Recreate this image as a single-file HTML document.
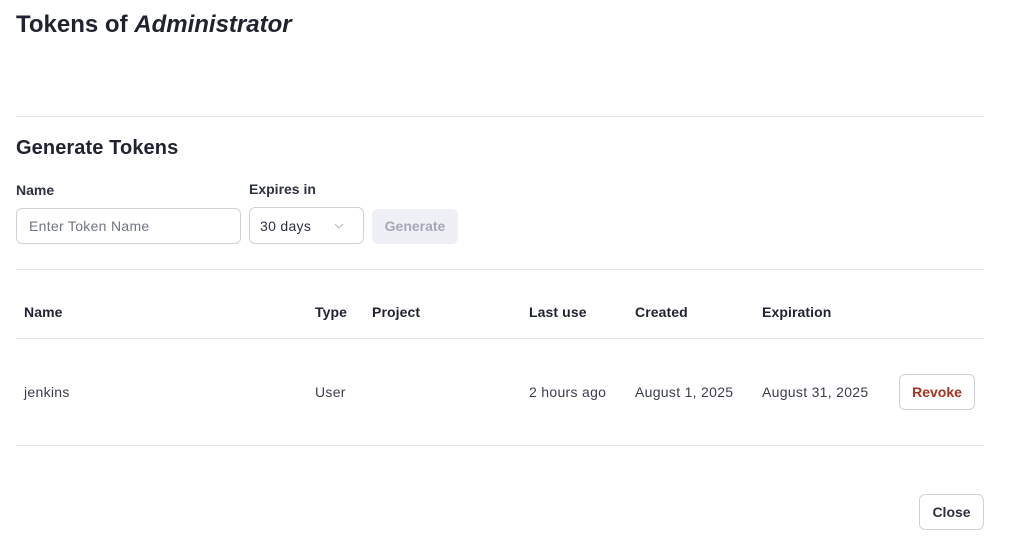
<!DOCTYPE html>
<html><head><meta charset="utf-8"><style>
*{box-sizing:border-box;margin:0;padding:0}
body{width:1015px;height:543px;background:#fff;font-family:"Liberation Sans",sans-serif;color:#1f2330;position:relative;overflow:hidden}
.a{position:absolute;white-space:nowrap}
h1{position:absolute;left:16px;top:11px;font-size:24px;font-weight:bold;letter-spacing:0px}
.hr{position:absolute;left:16px;width:968px;height:1px;background:#e3e4e8}
.lbl{font-size:14px;font-weight:bold;color:#2d3140}
.th{font-size:14px;font-weight:bold;color:#1f2330;top:304px;letter-spacing:0.1px}
.td{font-size:14px;color:#3a3e4b;top:384px;letter-spacing:0.3px}
.box{position:absolute;border:1px solid #cfd1d8;border-radius:6px}
</style></head><body>
<h1>Tokens of <i>Administrator</i></h1>
<div class="hr" style="top:116px"></div>
<div class="a" style="left:16px;top:137px;font-size:20px;font-weight:bold;letter-spacing:0.1px">Generate Tokens</div>
<div class="a lbl" style="left:16px;top:182px">Name</div>
<div class="a lbl" style="left:249px;top:181px">Expires in</div>
<div class="box" style="left:16px;top:208px;width:225px;height:36px"></div>
<div class="a" style="left:29px;top:218px;font-size:14px;color:#707483;letter-spacing:0.3px">Enter Token Name</div>
<div class="box" style="left:249px;top:207px;width:115px;height:37px"></div>
<div class="a" style="left:260px;top:218px;font-size:14px;color:#2d3140;letter-spacing:0.3px">30 days</div>
<svg class="a" style="left:333px;top:222px" width="12" height="8"><path d="M2 2l4 4 4-4" fill="none" stroke="#b8bac2" stroke-width="1"/></svg>
<div class="a" style="left:372px;top:209px;width:86px;height:35px;background:#eef0f6;border-radius:6px;font-size:14px;font-weight:bold;color:#a4a8b6;text-align:center;line-height:35px">Generate</div>
<div class="hr" style="top:269px"></div>
<div class="a th" style="left:24px">Name</div>
<div class="a th" style="left:315px">Type</div>
<div class="a th" style="left:372px">Project</div>
<div class="a th" style="left:529px">Last use</div>
<div class="a th" style="left:635px">Created</div>
<div class="a th" style="left:762px">Expiration</div>
<div class="hr" style="top:338px"></div>
<div class="a td" style="left:24px">jenkins</div>
<div class="a td" style="left:315px">User</div>
<div class="a td" style="left:529px">2 hours ago</div>
<div class="a td" style="left:635px">August 1, 2025</div>
<div class="a td" style="left:762px">August 31, 2025</div>
<div class="box" style="left:899px;top:374px;width:76px;height:36px;font-size:14px;font-weight:bold;color:#a8321f;text-align:center;line-height:34px">Revoke</div>
<div class="hr" style="top:445px"></div>
<div class="box" style="left:919px;top:494px;width:65px;height:36px;font-size:14px;font-weight:bold;color:#2d3140;text-align:center;line-height:34px">Close</div>
</body></html>
